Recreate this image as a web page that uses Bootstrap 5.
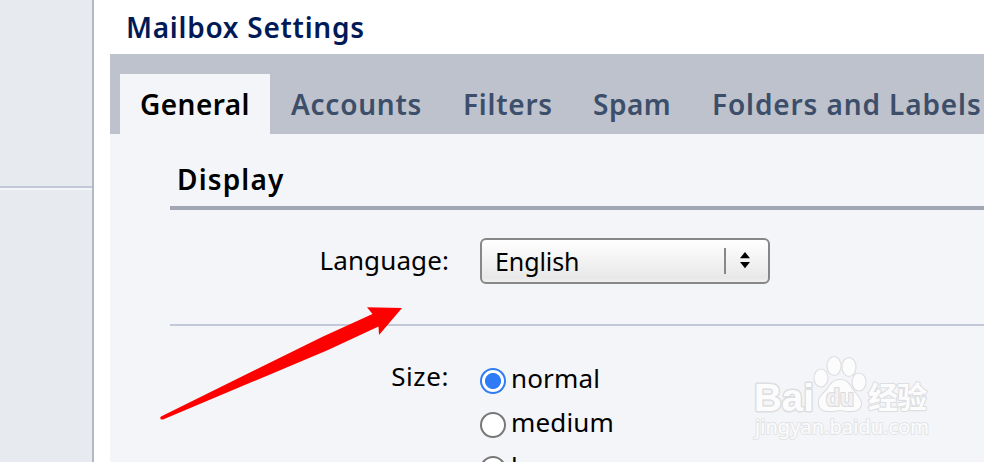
<!DOCTYPE html>
<html lang="en">
<head>
<meta charset="utf-8">
<meta name="viewport" content="width=device-width, initial-scale=1">
<title>Mailbox Settings</title>
<link href="https://cdn.jsdelivr.net/npm/bootstrap@5.3.0/dist/css/bootstrap.min.css" rel="stylesheet">
<style>
body{font-family:"Noto Sans","Open Sans",sans-serif;font-size:26px;color:#000;background:#fff;height:462px}
.side{width:94px;background:#e7ebf0;border-right:2px solid #b0b9c5}
.side-top{height:190px;border-bottom:2px solid #f3f5fa}
.side-top::after{content:"";display:block;margin-top:186px;height:2px;background:#c0c8d9}
.main-area{margin-left:16px;min-width:0}
.page-title{font-size:28px;font-weight:600;line-height:54px;height:54px;padding-left:16px;color:#001a57;letter-spacing:.73px}
.tabs-bar{background:#bec2cd;padding:20px 0 0 10px;height:80px}
.tabs-bar .nav-link{padding:0 0 0 20px;line-height:60px;height:60px;font-size:28px;font-weight:600;color:#3c4e69;border-radius:0;white-space:nowrap}
.tabs-bar .nav-link.active{background:#f4f5f8;color:#000}
.t1{width:151px;letter-spacing:.45px}.t2{width:172px;letter-spacing:.75px}.t3{width:130px;letter-spacing:.75px}.t4{width:119px;letter-spacing:.5px}.t5{width:300px;letter-spacing:.88px}
.tabs-bar .t1{border-right:1px solid #bec2cd}
.panel{background:#f4f5f8;padding-left:60px}
.section-title{font-size:28px;font-weight:600;line-height:50px;padding:20px 0 2px 7px;border-bottom:4px solid #a0a6b2;letter-spacing:1.15px}
.row-language{padding:28px 0 40px;border-bottom:2px solid #c0c8da}
.row-size{padding-top:30px}
.lbl{width:310px;padding-right:31px;text-align:right;line-height:44px;letter-spacing:.1px}
.row-size .lbl{line-height:40px;letter-spacing:.6px}
.picker{width:290px;height:46px;border:2px solid #878787;border-radius:6px;background:linear-gradient(#fff,#e8e8e8 90%,#efefef);padding:0 0 0 13px;font-size:25px;line-height:42px;color:#000}
.picked{letter-spacing:-.1px}
.picker-end{width:44px;height:26px;border-left:2px solid #888}
.opt{height:44px;line-height:44px;letter-spacing:.15px}
.opt .form-check-input{width:26px;height:26px;margin:6px 5px 0 0;border:2px solid #777;background-color:#fff;box-shadow:none}
.opt .form-check-input:checked{border-color:#2f7bf6;background-image:radial-gradient(circle,#2f7bf6 7.6px,#fff 8.4px)}
.arrow-mark{left:150px;top:290px}
.watermark{left:740px;top:345px}
</style>
<script src="https://cdn.jsdelivr.net/npm/bootstrap@5.3.0/dist/js/bootstrap.bundle.min.js"></script>
</head>
<body class="d-flex overflow-hidden position-relative">
<aside class="side flex-shrink-0 h-100"><div class="side-top overflow-hidden"></div></aside>
<main class="main-area flex-grow-1 d-flex flex-column overflow-hidden">
  <h1 class="page-title m-0">Mailbox Settings</h1>
  <nav class="nav nav-pills flex-nowrap tabs-bar flex-shrink-0">
    <a class="nav-link active flex-shrink-0 t1" href="#">General</a>
    <a class="nav-link flex-shrink-0 t2" href="#">Accounts</a>
    <a class="nav-link flex-shrink-0 t3" href="#">Filters</a>
    <a class="nav-link flex-shrink-0 t4" href="#">Spam</a>
    <a class="nav-link flex-shrink-0 t5" href="#">Folders and Labels</a>
  </nav>
  <section class="panel flex-grow-1">
    <h2 class="section-title m-0">Display</h2>
    <div class="row-language d-flex">
      <div class="lbl flex-shrink-0">Language:</div>
      <button type="button" class="picker d-flex align-items-center justify-content-between">
        <span class="picked">English</span>
        <span class="picker-end d-flex align-items-center">
          <svg width="42" height="26" viewBox="0 0 42 26"><path d="M14 10.300L19 4L24 10.300ZM14 14L24 14L19 20.300Z" fill="#000"/></svg>
        </span>
      </button>
    </div>
    <div class="row-size d-flex">
      <div class="lbl flex-shrink-0">Size:</div>
      <div>
        <label class="opt d-flex align-items-center"><input class="form-check-input" type="radio" name="size" checked><span>normal</span></label>
        <label class="opt d-flex align-items-center"><input class="form-check-input" type="radio" name="size"><span>medium</span></label>
        <label class="opt d-flex align-items-center"><input class="form-check-input" type="radio" name="size"><span>large</span></label>
      </div>
    </div>
  </section>
</main>
<svg class="arrow-mark position-absolute" width="270" height="140" viewBox="0 0 270 140"><path d="M11 126.500L172.500 46.800L222.500 24L217 17.300L252 18L229 45L228.500 36.500L178 60L13 129.500Q10 130 10.300 127.500Z" fill="#fe0000"/></svg>
<svg class="watermark position-absolute" width="210" height="105" viewBox="0 0 210 105" fill="#fcfcfd" stroke="#dcdee0" stroke-width="2.200" paint-order="stroke" stroke-linejoin="round">
  <text x="14" y="65.500" font-family="Liberation Sans" font-weight="700" font-size="39" textLength="60" lengthAdjust="spacingAndGlyphs" stroke-width="3">Bai</text>
  <ellipse cx="81" cy="33" rx="6.500" ry="8.500"/><ellipse cx="94" cy="21" rx="6.500" ry="9"/><ellipse cx="109" cy="22" rx="6.500" ry="9"/><ellipse cx="119" cy="37" rx="6.500" ry="8.500"/>
  <path d="M100 35C93 35 90 40 87 45C82 50 78 53 79 59C80 67 88 67 100 65C112 67 120 67 121 59C121 53 116 50 112 44C109 39 107 35 100 35Z"/>
  <text x="86" y="61" font-family="Liberation Sans" font-size="23" textLength="28" lengthAdjust="spacingAndGlyphs" fill="#f1f2f4" stroke="#d9dbdd" font-weight="700">du</text>
  <text x="128" y="63" font-family="Noto Sans CJK SC" font-weight="700" font-size="30" textLength="59">经验</text>
  <text x="15" y="89" font-family="Noto Sans" font-size="20" textLength="174" stroke="#e2e4e6" stroke-width="2">jingyan.baidu.com</text>
</svg>
</body>
</html>
